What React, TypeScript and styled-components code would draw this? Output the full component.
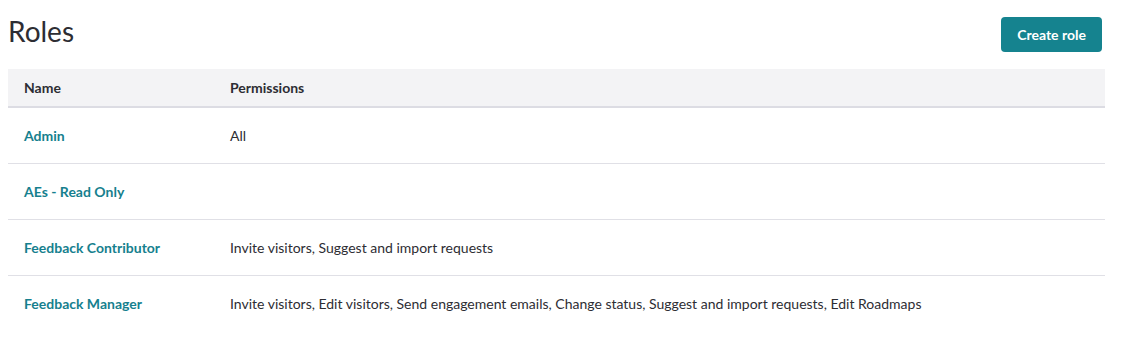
import React from 'react'
import styled, { createGlobalStyle } from 'styled-components'

interface IRole {
  name: string
  permissions: string
}

const roles: IRole[] = [
  { name: 'Admin', permissions: 'All' },
  { name: 'AEs - Read Only', permissions: '' },
  { name: 'Feedback Contributor', permissions: 'Invite visitors, Suggest and import requests' },
  {
    name: 'Feedback Manager',
    permissions:
      'Invite visitors, Edit visitors, Send engagement emails, Change status, Suggest and import requests, Edit Roadmaps',
  },
]

export default function App(): JSX.Element {
  return (
    <>
      <GlobalStyle />
      <Style.Page>
        <Style.Header>
          <Style.Title>Roles</Style.Title>
          <Style.Button type="button">Create role</Style.Button>
        </Style.Header>
        <Style.Table>
          <thead>
            <tr>
              <Style.Th>Name</Style.Th>
              <Style.Th>Permissions</Style.Th>
            </tr>
          </thead>
          <tbody>
            {roles.map((role, i) => (
              <Style.Row key={role.name} $last={i === roles.length - 1}>
                <Style.NameCell>
                  <Style.Link href="#">{role.name}</Style.Link>
                </Style.NameCell>
                <Style.Td>{role.permissions}</Style.Td>
              </Style.Row>
            ))}
          </tbody>
        </Style.Table>
      </Style.Page>
    </>
  )
}

const GlobalStyle = createGlobalStyle`
  body {
    margin: 0;
    background: #ffffff;
    font-family: Lato, "Liberation Sans", sans-serif;
    color: #2d2d33;
  }
`

const Style = {
  Page: styled.div`
    padding: 17px 21px 0 8px;
  `,
  Header: styled.div`
    display: flex;
    align-items: center;
    justify-content: space-between;
    height: 35px;
    margin-bottom: 17px;
  `,
  Title: styled.h1`
    margin: 0;
    padding-bottom: 8px;
    font-size: 28px;
    font-weight: 400;
    color: #2d2d33;
  `,
  Button: styled.button`
    height: 35px;
    padding: 0 16px;
    margin-right: 3px;
    border: none;
    border-radius: 4px;
    background-color: #15838f;
    color: #ffffff;
    font-family: inherit;
    font-size: 14px;
    font-weight: 700;
    cursor: pointer;
  `,
  Table: styled.table`
    width: 100%;
    border-collapse: collapse;
    font-size: 14px;
  `,
  Th: styled.th`
    height: 37px;
    padding: 0 16px;
    text-align: left;
    font-weight: 700;
    color: #2d2d33;
    background-color: #f3f3f5;
    border-bottom: 2px solid #dcdce3;
    &:first-child {
      width: 174px;
    }
  `,
  Row: styled.tr<{ $last: boolean }>`
    height: 56px;
    border-bottom: ${({ $last }) => ($last ? 'none' : '1px solid #e0e0e6')};
  `,
  NameCell: styled.td`
    padding: 0 16px;
  `,
  Td: styled.td`
    padding: 0 16px;
    color: #2d2d33;
  `,
  Link: styled.a`
    color: #16808e;
    font-weight: 700;
    text-decoration: none;
  `,
}
